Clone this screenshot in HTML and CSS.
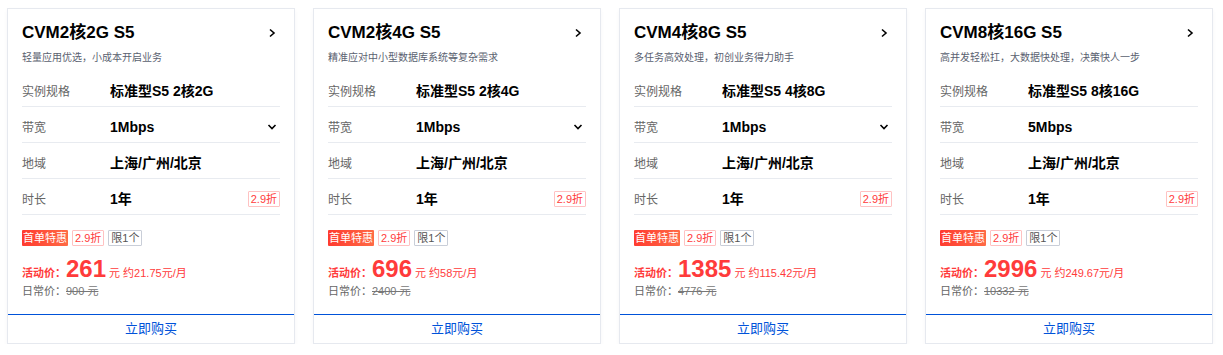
FILE: index.html
```html
<!DOCTYPE html>
<html lang="zh-CN">
<head>
    <meta charset="UTF-8">
    <title>云服务器 CVM 特惠</title>
    <link rel="stylesheet" href="styles.css">
</head>
<body>
    <div class="card-list">
        <!-- 2核2G -->
        <div class="card">
            <div class="card-body">
                <div class="card-head">
                    <h2 class="card-title">CVM2核2G S5</h2>
                    <svg class="arrow" width="10" height="10" viewBox="0 0 10 10"><polyline points="3,1.5 7,5 3,8.5" fill="none" stroke="#000" stroke-width="1.6"/></svg>
                </div>
                <div class="card-desc">轻量应用优选，小成本开启业务</div>
                <div class="spec-row"><span class="spec-label">实例规格</span><span class="spec-value">标准型S5 2核2G</span></div>
                <div class="spec-row"><span class="spec-label">带宽</span><span class="spec-value">1Mbps</span>
                    <svg class="drop" width="10" height="10" viewBox="0 0 10 10"><polyline points="1.5,3 5,6.5 8.5,3" fill="none" stroke="#000" stroke-width="1.6"/></svg></div>
                <div class="spec-row"><span class="spec-label">地域</span><span class="spec-value">上海/广州/北京</span></div>
                <div class="spec-row"><span class="spec-label">时长</span><span class="spec-value">1年</span><span class="tag tag-line">2.9折</span></div>
                <div class="tags">
                    <span class="tag tag-hot">首单特惠</span>
                    <span class="tag tag-line">2.9折</span>
                    <span class="tag tag-gray">限1个</span>
                </div>
                <div class="price-row"><span class="price-label">活动价：</span><span class="price">261</span><span class="price-unit">元 约21.75元/月</span></div>
                <div class="origin-row">日常价：<del>900 元</del></div>
            </div>
            <a class="buy-btn" href="#">立即购买</a>
        </div>

        <!-- 2核4G -->
        <div class="card">
            <div class="card-body">
                <div class="card-head">
                    <h2 class="card-title">CVM2核4G S5</h2>
                    <svg class="arrow" width="10" height="10" viewBox="0 0 10 10"><polyline points="3,1.5 7,5 3,8.5" fill="none" stroke="#000" stroke-width="1.6"/></svg>
                </div>
                <div class="card-desc">精准应对中小型数据库系统等复杂需求</div>
                <div class="spec-row"><span class="spec-label">实例规格</span><span class="spec-value">标准型S5 2核4G</span></div>
                <div class="spec-row"><span class="spec-label">带宽</span><span class="spec-value">1Mbps</span>
                    <svg class="drop" width="10" height="10" viewBox="0 0 10 10"><polyline points="1.5,3 5,6.5 8.5,3" fill="none" stroke="#000" stroke-width="1.6"/></svg></div>
                <div class="spec-row"><span class="spec-label">地域</span><span class="spec-value">上海/广州/北京</span></div>
                <div class="spec-row"><span class="spec-label">时长</span><span class="spec-value">1年</span><span class="tag tag-line">2.9折</span></div>
                <div class="tags">
                    <span class="tag tag-hot">首单特惠</span>
                    <span class="tag tag-line">2.9折</span>
                    <span class="tag tag-gray">限1个</span>
                </div>
                <div class="price-row"><span class="price-label">活动价：</span><span class="price">696</span><span class="price-unit">元 约58元/月</span></div>
                <div class="origin-row">日常价：<del>2400 元</del></div>
            </div>
            <a class="buy-btn" href="#">立即购买</a>
        </div>

        <!-- 4核8G -->
        <div class="card">
            <div class="card-body">
                <div class="card-head">
                    <h2 class="card-title">CVM4核8G S5</h2>
                    <svg class="arrow" width="10" height="10" viewBox="0 0 10 10"><polyline points="3,1.5 7,5 3,8.5" fill="none" stroke="#000" stroke-width="1.6"/></svg>
                </div>
                <div class="card-desc">多任务高效处理，初创业务得力助手</div>
                <div class="spec-row"><span class="spec-label">实例规格</span><span class="spec-value">标准型S5 4核8G</span></div>
                <div class="spec-row"><span class="spec-label">带宽</span><span class="spec-value">1Mbps</span>
                    <svg class="drop" width="10" height="10" viewBox="0 0 10 10"><polyline points="1.5,3 5,6.5 8.5,3" fill="none" stroke="#000" stroke-width="1.6"/></svg></div>
                <div class="spec-row"><span class="spec-label">地域</span><span class="spec-value">上海/广州/北京</span></div>
                <div class="spec-row"><span class="spec-label">时长</span><span class="spec-value">1年</span><span class="tag tag-line">2.9折</span></div>
                <div class="tags">
                    <span class="tag tag-hot">首单特惠</span>
                    <span class="tag tag-line">2.9折</span>
                    <span class="tag tag-gray">限1个</span>
                </div>
                <div class="price-row"><span class="price-label">活动价：</span><span class="price">1385</span><span class="price-unit">元 约115.42元/月</span></div>
                <div class="origin-row">日常价：<del>4776 元</del></div>
            </div>
            <a class="buy-btn" href="#">立即购买</a>
        </div>

        <!-- 8核16G -->
        <div class="card">
            <div class="card-body">
                <div class="card-head">
                    <h2 class="card-title">CVM8核16G S5</h2>
                    <svg class="arrow" width="10" height="10" viewBox="0 0 10 10"><polyline points="3,1.5 7,5 3,8.5" fill="none" stroke="#000" stroke-width="1.6"/></svg>
                </div>
                <div class="card-desc">高并发轻松扛，大数据快处理，决策快人一步</div>
                <div class="spec-row"><span class="spec-label">实例规格</span><span class="spec-value">标准型S5 8核16G</span></div>
                <div class="spec-row"><span class="spec-label">带宽</span><span class="spec-value">5Mbps</span></div>
                <div class="spec-row"><span class="spec-label">地域</span><span class="spec-value">上海/广州/北京</span></div>
                <div class="spec-row"><span class="spec-label">时长</span><span class="spec-value">1年</span><span class="tag tag-line">2.9折</span></div>
                <div class="tags">
                    <span class="tag tag-hot">首单特惠</span>
                    <span class="tag tag-line">2.9折</span>
                    <span class="tag tag-gray">限1个</span>
                </div>
                <div class="price-row"><span class="price-label">活动价：</span><span class="price">2996</span><span class="price-unit">元 约249.67元/月</span></div>
                <div class="origin-row">日常价：<del>10332 元</del></div>
            </div>
            <a class="buy-btn" href="#">立即购买</a>
        </div>
    </div>
</body>
</html>
```

FILE: styles.css
```css
body {
    margin: 0;
    padding: 8px 0 0 7px;
    background-color: #fff;
    font-family: "Liberation Sans", "Noto Sans CJK SC", sans-serif;
    color: #000;
}
.card-list {
    display: flex;
    gap: 18px;
}
.card {
    width: 288px;
    box-sizing: border-box;
    border: 1px solid #e6e9ef;
    background-color: #fff;
    box-shadow: 0 2px 4px rgba(40, 60, 110, 0.04);
    display: flex;
    flex-direction: column;
}
.card-body {
    padding: 12px 14px 0;
}
.card-head {
    display: flex;
    align-items: center;
    justify-content: space-between;
    height: 24px;
}
.card-title {
    margin: 0;
    font-size: 17px;
    font-weight: bold;
    line-height: 24px;
}
.arrow {
    margin-right: 3px;
}
.card-desc {
    margin-top: 5px;
    font-size: 10px;
    line-height: 16px;
    height: 16px;
    color: #5a6170;
}
.spec-row {
    display: flex;
    align-items: center;
    height: 20px;
    line-height: 20px;
    padding: 10px 0 5px;
    border-bottom: 1px solid #e8ebf0;
}
.card-desc + .spec-row {
    margin-top: 5px;
}
.spec-label {
    width: 88px;
    padding-top: 2px;
    font-size: 12px;
    color: #666;
}
.spec-value {
    flex: 1;
    font-size: 14px;
    font-weight: bold;
}
.drop {
    margin-right: 3px;
}
.tag {
    display: inline-block;
    height: 16px;
    line-height: 14px;
    box-sizing: border-box;
    padding: 0 2px;
    font-size: 11px;
    border-radius: 1px;
}
.tag-line {
    color: #ff3b3b;
    border: 1px solid #ffc2c2;
}
.tag-hot {
    padding: 0 1px;
    line-height: 16px;
    color: #fff;
    background: linear-gradient(90deg, #ff3b30, #ff6a45);
}
.tag-gray {
    color: #555;
    border: 1px solid #c9ced8;
}
.tags {
    display: flex;
    gap: 4px;
    height: 16px;
    margin-top: 15px;
}
.price-row {
    display: flex;
    align-items: baseline;
    height: 28px;
    line-height: 28px;
    margin-top: 9px;
    color: #ff3b3b;
}
.price-label {
    font-size: 11px;
    font-weight: bold;
}
.price {
    margin-right: 3px;
    font-size: 24px;
    font-weight: bold;
}
.price-unit {
    font-size: 11px;
}
.origin-row {
    height: 16px;
    line-height: 16px;
    font-size: 11px;
    color: #666;
}
.origin-row del {
    color: #777;
}
.buy-btn {
    display: block;
    margin-top: 15px;
    height: 28px;
    line-height: 28px;
    border-top: 1px solid #0052d9;
    text-align: center;
    font-size: 13px;
    color: #0052d9;
    text-decoration: none;
}
```
